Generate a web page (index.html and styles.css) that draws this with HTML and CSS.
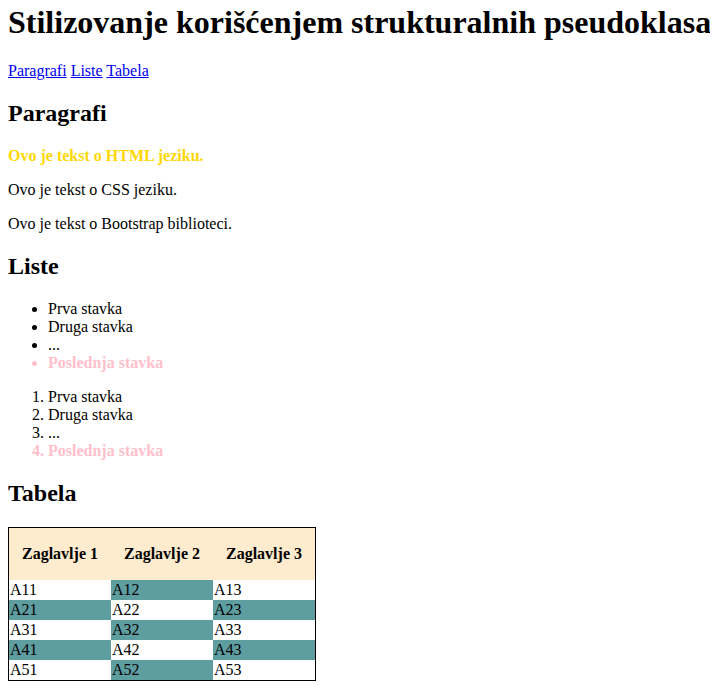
FILE: index.html
```html
<!DOCTYPE html>
<html lang="sr-Latn">
<head>
<meta charset="utf-8">
<title>Stilizovanje korišćenjem strukturalnih pseudoklasa</title>
<link rel="stylesheet" href="styles.css">
</head>
<body>
<h1>Stilizovanje korišćenjem strukturalnih pseudoklasa</h1>
<nav>
<a href="#paragrafi">Paragrafi</a>
<a href="#liste">Liste</a>
<a href="#tabela">Tabela</a>
</nav>
<section class="paragraphs">
<h2 id="paragrafi">Paragrafi</h2>
<p>Ovo je tekst o HTML jeziku.</p>
<p>Ovo je tekst o CSS jeziku.</p>
<p>Ovo je tekst o Bootstrap biblioteci.</p>
</section>
<section>
<h2 id="liste">Liste</h2>
<ul>
<li>Prva stavka</li>
<li>Druga stavka</li>
<li>...</li>
<li>Poslednja stavka</li>
</ul>
<ol>
<li>Prva stavka</li>
<li>Druga stavka</li>
<li>...</li>
<li>Poslednja stavka</li>
</ol>
</section>
<section>
<h2 id="tabela">Tabela</h2>
<table>
<thead>
<tr><th>Zaglavlje 1</th><th>Zaglavlje 2</th><th>Zaglavlje 3</th></tr>
</thead>
<tbody>
<tr><td>A11</td><td>A12</td><td>A13</td></tr>
<tr><td>A21</td><td>A22</td><td>A23</td></tr>
<tr><td>A31</td><td>A32</td><td>A33</td></tr>
<tr><td>A41</td><td>A42</td><td>A43</td></tr>
<tr><td>A51</td><td>A52</td><td>A53</td></tr>
</tbody>
</table>
</section>
</body>
</html>
```
FILE: styles.css
```css
body {
  margin: 0 8px 8px;
  font-family: "Liberation Serif", "Times New Roman", serif;
  font-size: 16px;
  line-height: 18px;
  color: black;
  background: white;
}

h1 {
  margin: 0 -4px 21px 0;
  padding-top: 3px;
  font-size: 32px;
  line-height: 38px;
}

h2 {
  margin: 20px 0;
  font-size: 24px;
  line-height: 27px;
}

p,
ul,
ol {
  margin: 16px 0;
}

a {
  color: #0000ee;
}

.paragraphs p:first-of-type {
  color: gold;
  font-weight: bold;
}

li:last-child {
  color: pink;
  font-weight: bold;
}

table {
  border: 1px solid black;
  border-collapse: collapse;
}

th {
  min-width: 76px;
  padding: 17px 13px;
  background: blanchedalmond;
}

td {
  padding: 1px;
}

tr:nth-child(odd) td:nth-child(even),
tr:nth-child(even) td:nth-child(odd) {
  background: cadetblue;
}
```
